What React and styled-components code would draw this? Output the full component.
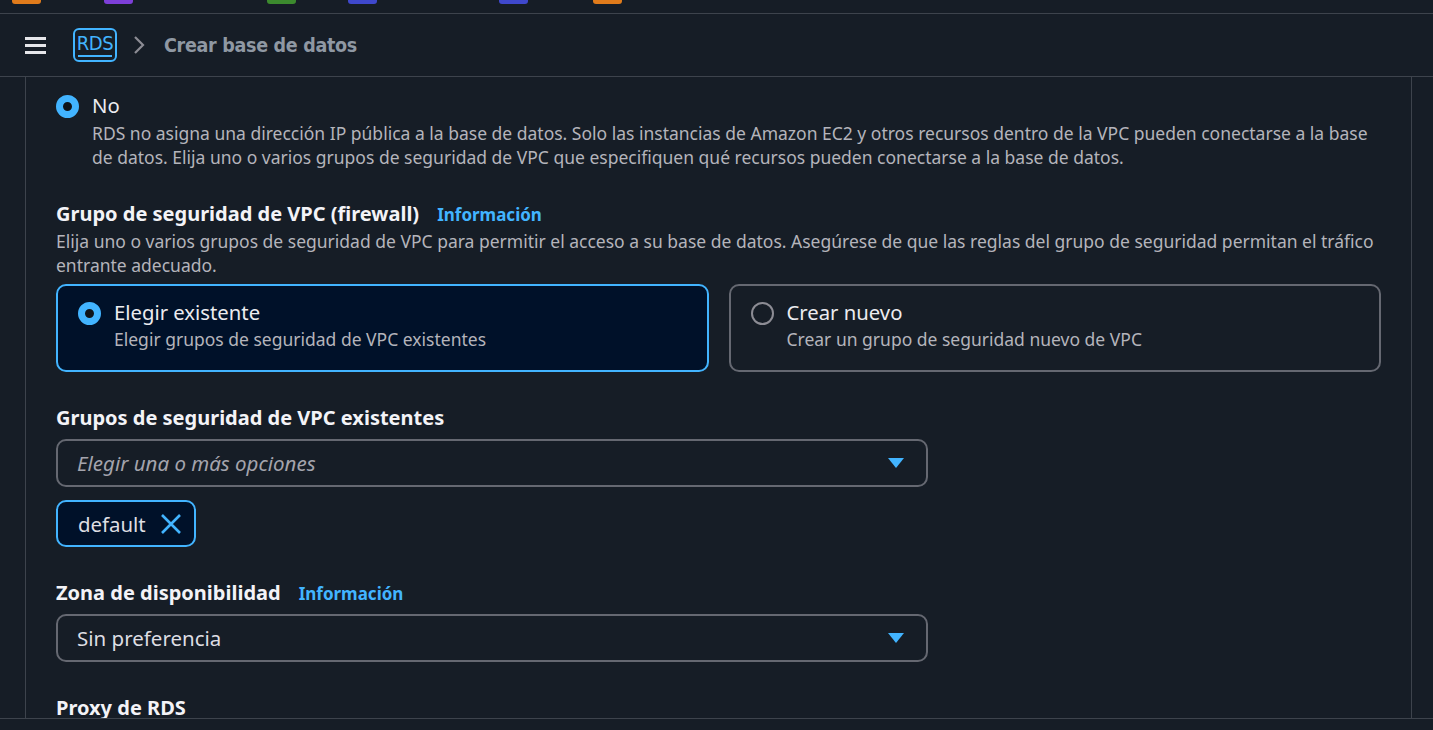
import React from "react";
import styled, { createGlobalStyle } from "styled-components";

const Global = createGlobalStyle`
  html, body { margin: 0; padding: 0; background: #161d26; }
  body { font-family: "Noto Sans", "Open Sans", sans-serif; color: #dedee3; }
  * { box-sizing: border-box; }
`;

const Page = styled.div`
  height: 730px;
  display: flex;
  flex-direction: column;
  overflow: hidden;
  background: #161d26;
`;

const FavStrip = styled.div`
  height: 14px;
  border-bottom: 1px solid #3d434c;
  position: relative;
`;

const Fav = styled.span`
  position: absolute;
  top: 0;
  height: 4px;
  width: 29px;
  border-radius: 0 0 3px 3px;
  background: ${(p) => p.$c};
`;

const Header = styled.header`
  height: 63px;
  border-bottom: 1px solid #3d434c;
  display: flex;
  align-items: center;
  padding-left: 25px;
`;

const Burger = styled.button`
  width: 21px;
  height: 17px;
  padding: 0;
  border: 0;
  background: transparent;
  display: flex;
  flex-direction: column;
  justify-content: space-between;
  margin-right: 27px;
  span { display: block; height: 3px; background: #e6e6ea; }
`;

const Logo = styled.div`
  position: relative;
  width: 44px;
  height: 34px;
  border: 2px solid #42b4ff;
  border-radius: 6px;
  display: flex;
  align-items: flex-start;
  justify-content: center;
  color: #42b4ff;
  font-family: "Liberation Sans Narrow", "DejaVu Sans Condensed", "Roboto", sans-serif;
  font-stretch: condensed;
  font-size: 20px;
  letter-spacing: -0.5px;
  line-height: 26px;
  &::after {
    content: "";
    position: absolute;
    left: 3px;
    right: 3px;
    bottom: 3px;
    height: 2px;
    background: #42b4ff;
  }
`;

const Crumb = styled.span`
  margin-left: 19px;
  font-family: "Liberation Sans Narrow", "DejaVu Sans Condensed", "Roboto", sans-serif;
  font-stretch: condensed;
  font-weight: 700;
  font-size: 19.5px;
  letter-spacing: -0.3px;
  color: #8f98a3;
`;

const Main = styled.main`
  flex: 1;
  min-height: 0;
  display: flex;
  padding: 0 21px 0 25px;
`;

const Panel = styled.section`
  flex: 1;
  border-left: 1px solid #3d434c;
  border-right: 1px solid #3d434c;
  padding: 16px 30px 0 30px;
  overflow: hidden;
`;

const Footer = styled.div`
  height: 12px;
  border-top: 1px solid #3d434c;
`;

const Radio = styled.span`
  flex: none;
  width: 23px;
  height: 23px;
  border-radius: 50%;
  border: ${(p) => (p.$on ? "7px solid #42b4ff" : "2px solid #8c8c94")};
  background: ${(p) => (p.$on ? "#0f141a" : "transparent")};
`;

const OptionRow = styled.div`
  display: flex;
  gap: 13px;
  align-items: flex-start;
  & > ${Radio} { margin-top: 2px; }
`;

const OptionText = styled.div`
  display: flex;
  flex-direction: column;
`;

const OptLabel = styled.div`
  font-size: 20.3px;
  line-height: 25px;
  color: #ececf0;
`;

const Desc = styled.div`
  font-size: 17.5px;
  line-height: 24px;
  color: #b4b4bb;
  margin-top: ${(p) => p.$mt || 0}px;
`;

const Heading = styled.h3`
  margin: ${(p) => p.$mt ?? 33}px 0 0;
  height: 24px;
  font-size: 20px;
  line-height: 24px;
  font-weight: 700;
  color: #f3f3f7;
  display: flex;
  align-items: baseline;
  gap: 18px;
  white-space: nowrap;
`;

const Info = styled.a`
  font-size: 17px;
  line-height: 24px;
  font-weight: 700;
  color: #42b4ff;
  text-decoration: none;
`;

const Tiles = styled.div`
  margin-top: 7px;
  display: grid;
  grid-template-columns: 1fr 1fr;
  gap: 20px;
`;

const Tile = styled.div`
  height: 88px;
  border-radius: 10px;
  border: 2px solid ${(p) => (p.$on ? "#42b4ff" : "#656871")};
  background: ${(p) => (p.$on ? "#001129" : "transparent")};
  padding: 14px 20px;
  display: flex;
  gap: 13px;
  align-items: flex-start;
  & > ${Radio} { margin-top: 2px; }
`;

const Select = styled.div`
  margin-top: 9px;
  width: 872px;
  height: 48px;
  border: 2px solid #656871;
  border-radius: 10px;
  display: flex;
  align-items: center;
  justify-content: space-between;
  padding: 0 22px 0 19px;
`;

const SelectText = styled.span`
  font-size: 20.5px;
  color: ${(p) => (p.$ph ? "#a4a4ad" : "#dedee3")};
  font-style: ${(p) => (p.$ph ? "italic" : "normal")};
`;

const Token = styled.div`
  margin-top: 13px;
  width: 140px;
  height: 47px;
  border: 2px solid #42b4ff;
  border-radius: 10px;
  background: #001129;
  display: flex;
  align-items: center;
  gap: 14px;
  padding-left: 20px;
  font-size: 20.4px;
  color: #dedee3;
`;

const Caret = () => (
  <svg width="16" height="11" viewBox="0 0 16 11">
    <path d="M0 0 H16 L8 10 Z" fill="#42b4ff" />
  </svg>
);

const Chevron = () => (
  <svg width="12" height="18" viewBox="0 0 12 18" style={{ marginLeft: 16 }}>
    <path d="M2 1 L10 9 L2 17" fill="none" stroke="#8c8c94" strokeWidth="2.2" />
  </svg>
);

const Cross = () => (
  <svg width="22" height="22" viewBox="0 0 22 22">
    <path d="M2 2 L20 20 M20 2 L2 20" stroke="#42b4ff" strokeWidth="2.6" />
  </svg>
);

const favs = [
  [12, "#e07b1b"],
  [104, "#7d3fd8"],
  [267, "#3c8a2e"],
  [348, "#3f48cc"],
  [499, "#3f48cc"],
  [593, "#e07b1b"],
];

export default function App() {
  return (
    <Page>
      <Global />
      <FavStrip>
        {favs.map(([x, c]) => (
          <Fav key={x} $c={c} style={{ left: x }} />
        ))}
      </FavStrip>
      <Header>
        <Burger aria-label="menu">
          <span />
          <span />
          <span />
        </Burger>
        <Logo>RDS</Logo>
        <Chevron />
        <Crumb>Crear base de datos</Crumb>
      </Header>
      <Main>
        <Panel>
          <OptionRow>
            <Radio $on />
            <OptionText>
              <OptLabel>No</OptLabel>
              <Desc $mt={3}>
                RDS no asigna una dirección IP pública a la base de datos. Solo las instancias de Amazon EC2 y otros
                recursos dentro de la VPC pueden conectarse a la base de datos. Elija uno o varios grupos de seguridad de
                VPC que especifiquen qué recursos pueden conectarse a la base de datos.
              </Desc>
            </OptionText>
          </OptionRow>

          <Heading>
            Grupo de seguridad de VPC (firewall) <Info href="#">Información</Info>
          </Heading>
          <Desc $mt={3}>
            Elija uno o varios grupos de seguridad de VPC para permitir el acceso a su base de datos. Asegúrese de que
            las reglas del grupo de seguridad permitan el tráfico entrante adecuado.
          </Desc>
          <Tiles>
            <Tile $on>
              <Radio $on />
              <OptionText>
                <OptLabel>Elegir existente</OptLabel>
                <Desc $mt={2}>Elegir grupos de seguridad de VPC existentes</Desc>
              </OptionText>
            </Tile>
            <Tile>
              <Radio />
              <OptionText>
                <OptLabel>Crear nuevo</OptLabel>
                <Desc $mt={2}>Crear un grupo de seguridad nuevo de VPC</Desc>
              </OptionText>
            </Tile>
          </Tiles>

          <Heading $mt={34}>Grupos de seguridad de VPC existentes</Heading>
          <Select>
            <SelectText $ph>Elegir una o más opciones</SelectText>
            <Caret />
          </Select>
          <Token>
            default <Cross />
          </Token>

          <Heading $mt={34}>
            Zona de disponibilidad <Info href="#">Información</Info>
          </Heading>
          <Select>
            <SelectText>Sin preferencia</SelectText>
            <Caret />
          </Select>

          <Heading $mt={34}>Proxy de RDS</Heading>
        </Panel>
      </Main>
      <Footer />
    </Page>
  );
}
